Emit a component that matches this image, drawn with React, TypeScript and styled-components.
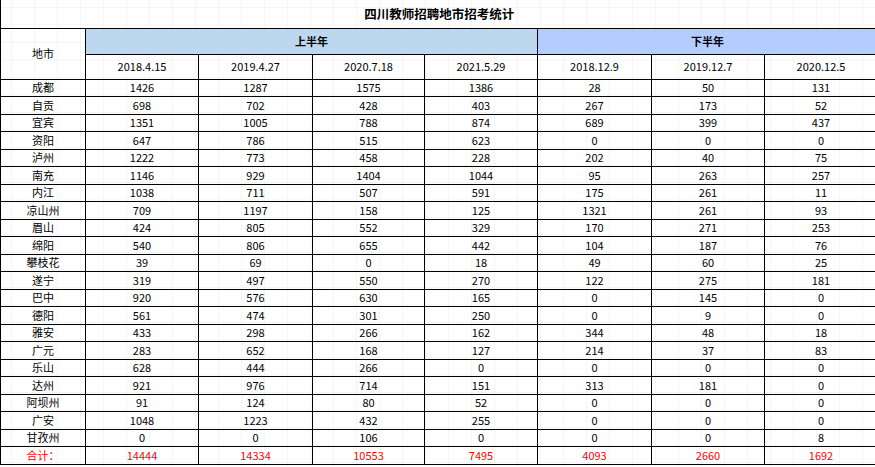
import styled, { createGlobalStyle } from "styled-components";

const GlobalStyle = createGlobalStyle`
  html, body {
    margin: 0;
    padding: 0;
    background-color: #fff;
    background-image:
      linear-gradient(to right, #f5f5f5 1px, transparent 1px),
      linear-gradient(to bottom, #f5f5f5 1px, transparent 1px);
    background-size: 23px 17.5px;
    background-position: 11px 7px;
    overflow: hidden;
  }
  #root {
    width: 875px;
    height: 467px;
    overflow: hidden;
  }
`;

type Row = { city: string; values: number[] };

const rows: Row[] = [
  { city: "成都", values: [1426, 1287, 1575, 1386, 28, 50, 131] },
  { city: "自贡", values: [698, 702, 428, 403, 267, 173, 52] },
  { city: "宜宾", values: [1351, 1005, 788, 874, 689, 399, 437] },
  { city: "资阳", values: [647, 786, 515, 623, 0, 0, 0] },
  { city: "泸州", values: [1222, 773, 458, 228, 202, 40, 75] },
  { city: "南充", values: [1146, 929, 1404, 1044, 95, 263, 257] },
  { city: "内江", values: [1038, 711, 507, 591, 175, 261, 11] },
  { city: "凉山州", values: [709, 1197, 158, 125, 1321, 261, 93] },
  { city: "眉山", values: [424, 805, 552, 329, 170, 271, 253] },
  { city: "绵阳", values: [540, 806, 655, 442, 104, 187, 76] },
  { city: "攀枝花", values: [39, 69, 0, 18, 49, 60, 25] },
  { city: "遂宁", values: [319, 497, 550, 270, 122, 275, 181] },
  { city: "巴中", values: [920, 576, 630, 165, 0, 145, 0] },
  { city: "德阳", values: [561, 474, 301, 250, 0, 9, 0] },
  { city: "雅安", values: [433, 298, 266, 162, 344, 48, 18] },
  { city: "广元", values: [283, 652, 168, 127, 214, 37, 83] },
  { city: "乐山", values: [628, 444, 266, 0, 0, 0, 0] },
  { city: "达州", values: [921, 976, 714, 151, 313, 181, 0] },
  { city: "阿坝州", values: [91, 124, 80, 52, 0, 0, 0] },
  { city: "广安", values: [1048, 1223, 432, 255, 0, 0, 0] },
  { city: "甘孜州", values: [0, 0, 106, 0, 0, 0, 8] },
];

const totals = [14444, 14334, 10553, 7495, 4093, 2660, 1692];

const firstHalf = ["2018.4.15", "2019.4.27", "2020.7.18", "2021.5.29"];
const secondHalf = ["2018.12.9", "2019.12.7", "2020.12.5"];
const colWidths = [85, 113, 114, 112, 113, 114, 113, 113];

export default function App() {
  return (
    <>
      <GlobalStyle />
      <Sheet>
        <colgroup>
          {colWidths.map((w, i) => (
            <col key={i} style={{ width: w }} />
          ))}
        </colgroup>
        <tbody>
          <TitleRow>
            <TitleCell colSpan={8}>四川教师招聘地市招考统计</TitleCell>
          </TitleRow>
          <BandRow>
            <Cell rowSpan={2}>地市</Cell>
            <Band colSpan={4} $fill="#bdd7ee">
              上半年
            </Band>
            <Band colSpan={3} $fill="#b4ccff">
              下半年
            </Band>
          </BandRow>
          <DateRow>
            {[...firstHalf, ...secondHalf].map((d) => (
              <Cell key={d}>{d}</Cell>
            ))}
          </DateRow>
          {rows.map((r) => (
            <DataRow key={r.city}>
              <Cell>{r.city}</Cell>
              {r.values.map((v, i) => (
                <Cell key={i}>{v}</Cell>
              ))}
            </DataRow>
          ))}
          <DataRow>
            <Cell $red>合计：</Cell>
            {totals.map((v, i) => (
              <Cell key={i} $red>
                {v}
              </Cell>
            ))}
          </DataRow>
        </tbody>
      </Sheet>
    </>
  );
}

const Sheet = styled.table`
  border-collapse: collapse;
  table-layout: fixed;
  width: 877px;
  font-family: "Noto Sans CJK SC", "Noto Sans", sans-serif;
  font-size: 11px;
  color: #000;
`;

const TitleRow = styled.tr`
  height: 28px;
`;

const TitleCell = styled.td`
  border-left: 1px solid #000;
  text-align: center;
  font-weight: bold;
  font-size: 12.5px;
  padding: 0 0 1px;
`;

const BandRow = styled.tr`
  height: 26px;
`;

const DateRow = styled.tr`
  height: 25px;
`;

const DataRow = styled.tr`
  height: 17.5px;
`;

const Cell = styled.td<{ $red?: boolean }>`
  border: 1px solid #000;
  text-align: center;
  padding: 0;
  line-height: 15px;
  white-space: nowrap;
  color: ${(p) => (p.$red ? "#ff0000" : "#000")};
`;

const Band = styled.td<{ $fill: string }>`
  border: 1px solid #000;
  background: ${(p) => p.$fill};
  text-align: center;
  font-weight: bold;
  padding: 0;
`;
